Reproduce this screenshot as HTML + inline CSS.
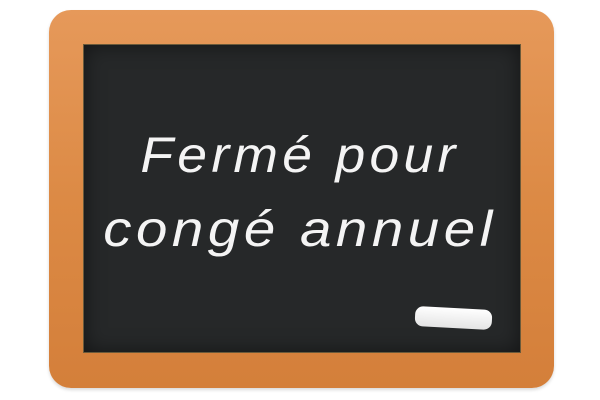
<!DOCTYPE html>
<html><head><meta charset="utf-8"><style>
html,body{margin:0;padding:0;background:#fff;width:600px;height:400px;overflow:hidden}
.frame{position:absolute;left:49px;top:10px;width:505px;height:378px;border-radius:22px;
background:linear-gradient(180deg,#e6995a 0%,#dc8a45 50%,#d47f3a 100%);box-shadow:0 2px 3px rgba(0,0,0,.15)}
.board{position:absolute;left:83px;top:44px;width:438px;height:309px;background:#262829;
box-shadow:inset 0 0 20px rgba(0,0,0,.5);border:1px solid #6b5a3a;box-sizing:border-box}
.t{position:absolute;left:0;width:600px;text-align:center;color:#f4f4f4;font-family:"Liberation Sans",sans-serif;font-style:italic;font-size:50px;letter-spacing:4px}
.chalk{position:absolute;left:415px;top:308px;width:77px;height:20px;background:linear-gradient(180deg,#fff,#e4e4e4);border-radius:8px;transform:rotate(3deg)}
</style></head><body>
<div class="frame"></div>
<div class="board"></div>
<div class="t" style="top:126px;transform:scaleX(1.07);">Fermé pour</div>
<div class="t" style="top:200px;transform:scaleX(1.13);">congé annuel</div>
<div class="chalk"></div>
</body></html>
